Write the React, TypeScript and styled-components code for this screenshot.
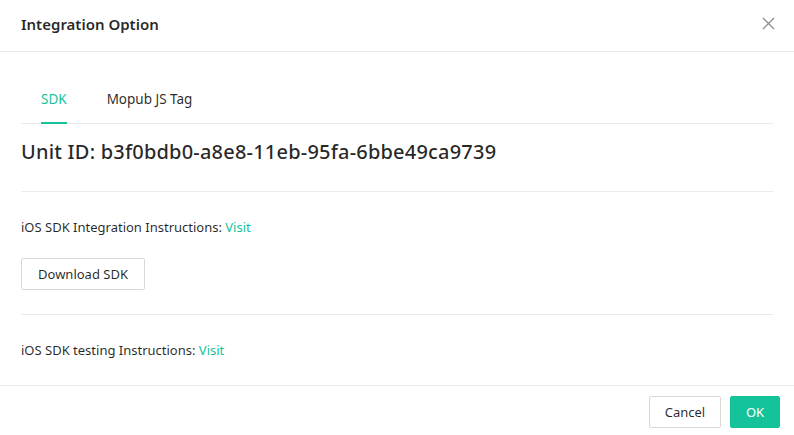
import React, { useState } from "react";
import styled, { createGlobalStyle } from "styled-components";

const Global = createGlobalStyle`
  html, body { margin: 0; padding: 0; background: #fff; }
  body { font-family: "Noto Sans", "Open Sans", Arial, sans-serif; color: rgba(0,0,0,0.85); }
  * { box-sizing: border-box; }
`;

const GREEN = "#15c39a";

const Modal = styled.div`
  width: 794px;
  height: 435px;
  background: #fff;
  display: flex;
  flex-direction: column;
`;

const Header = styled.div`
  height: 52px;
  padding: 0 18px 0 21px;
  display: flex;
  align-items: center;
  justify-content: space-between;
  border-bottom: 1px solid #ebebeb;
`;

const Title = styled.div`
  font-size: 15px;
  font-weight: 600;
  line-height: 22px;
  color: rgba(0,0,0,0.85);
  margin-top: -4px;
`;

const Close = styled.button`
  border: 0;
  background: none;
  padding: 0;
  width: 16px;
  height: 16px;
  display: flex;
  align-items: center;
  justify-content: center;
  cursor: pointer;
  margin-top: -4px;
`;

const Body = styled.div`
  flex: 1;
  padding: 24px 21px 24px 21px;
  display: flex;
  flex-direction: column;
`;

const TabBar = styled.div`
  display: flex;
  gap: 40px;
  padding-left: 20px;
  border-bottom: 1px solid #ebebeb;
`;

const Tab = styled.div<{ $active?: boolean }>`
  height: 48px;
  margin-bottom: -1px;
  display: flex;
  align-items: center;
  font-size: 13.5px;
  line-height: 22px;
  color: ${(p) => (p.$active ? GREEN : "rgba(0,0,0,0.85)")};
  border-bottom: 2px solid ${(p) => (p.$active ? GREEN : "transparent")};
  cursor: pointer;
`;

const UnitId = styled.h2`
  margin: 14px 0 0;
  font-size: 20px;
  font-weight: 500;
  line-height: 28px;
  letter-spacing: 0.2px;
  color: rgba(0,0,0,0.85);
`;

const Divider = styled.div<{ $top: number }>`
  height: 1px;
  background: #ebebeb;
  margin-top: ${(p) => p.$top}px;
`;

const Line = styled.div<{ $top: number }>`
  margin-top: ${(p) => p.$top}px;
  font-size: 13px;
  line-height: 22px;
  color: rgba(0,0,0,0.85);
`;

const Link = styled.a`
  color: ${GREEN};
  text-decoration: none;
`;

const Button = styled.button<{ $primary?: boolean; $w: number }>`
  height: 32px;
  width: ${(p) => p.$w}px;
  padding: 0;
  font-family: inherit;
  font-size: 13px;
  border-radius: 2px;
  cursor: pointer;
  border: 1px solid ${(p) => (p.$primary ? GREEN : "#d9d9d9")};
  background: ${(p) => (p.$primary ? GREEN : "#fff")};
  color: ${(p) => (p.$primary ? "#fff" : "rgba(0,0,0,0.85)")};
`;

const ActionRow = styled.div`
  margin-top: 20px;
  display: flex;
`;

const Footer = styled.div`
  border-top: 1px solid #ebebeb;
  padding: 10px 14px 0 0;
  height: 50px;
  display: flex;
  justify-content: flex-end;
  gap: 9px;
`;

export default function App() {
  const [tab, setTab] = useState(0);
  return (
    <>
      <Global />
      <Modal>
        <Header>
          <Title>Integration Option</Title>
          <Close aria-label="close">
            <svg width="13" height="13" viewBox="0 0 13 13">
              <path d="M1 1L12 12M12 1L1 12" stroke="#8c8c8c" strokeWidth="1.3" fill="none" />
            </svg>
          </Close>
        </Header>
        <Body>
          <TabBar>
            <Tab $active={tab === 0} onClick={() => setTab(0)}>SDK</Tab>
            <Tab $active={tab === 1} onClick={() => setTab(1)}>Mopub JS Tag</Tab>
          </TabBar>
          <UnitId>Unit ID: b3f0bdb0-a8e8-11eb-95fa-6bbe49ca9739</UnitId>
          <Divider $top={25} />
          <Line $top={24}>
            iOS SDK Integration Instructions: <Link href="#">Visit</Link>
          </Line>
          <ActionRow>
            <Button $w={124}>Download SDK</Button>
          </ActionRow>
          <Divider $top={24} />
          <Line $top={24}>
            iOS SDK testing Instructions: <Link href="#">Visit</Link>
          </Line>
        </Body>
        <Footer>
          <Button $w={72}>Cancel</Button>
          <Button $primary $w={50}>OK</Button>
        </Footer>
      </Modal>
    </>
  );
}
